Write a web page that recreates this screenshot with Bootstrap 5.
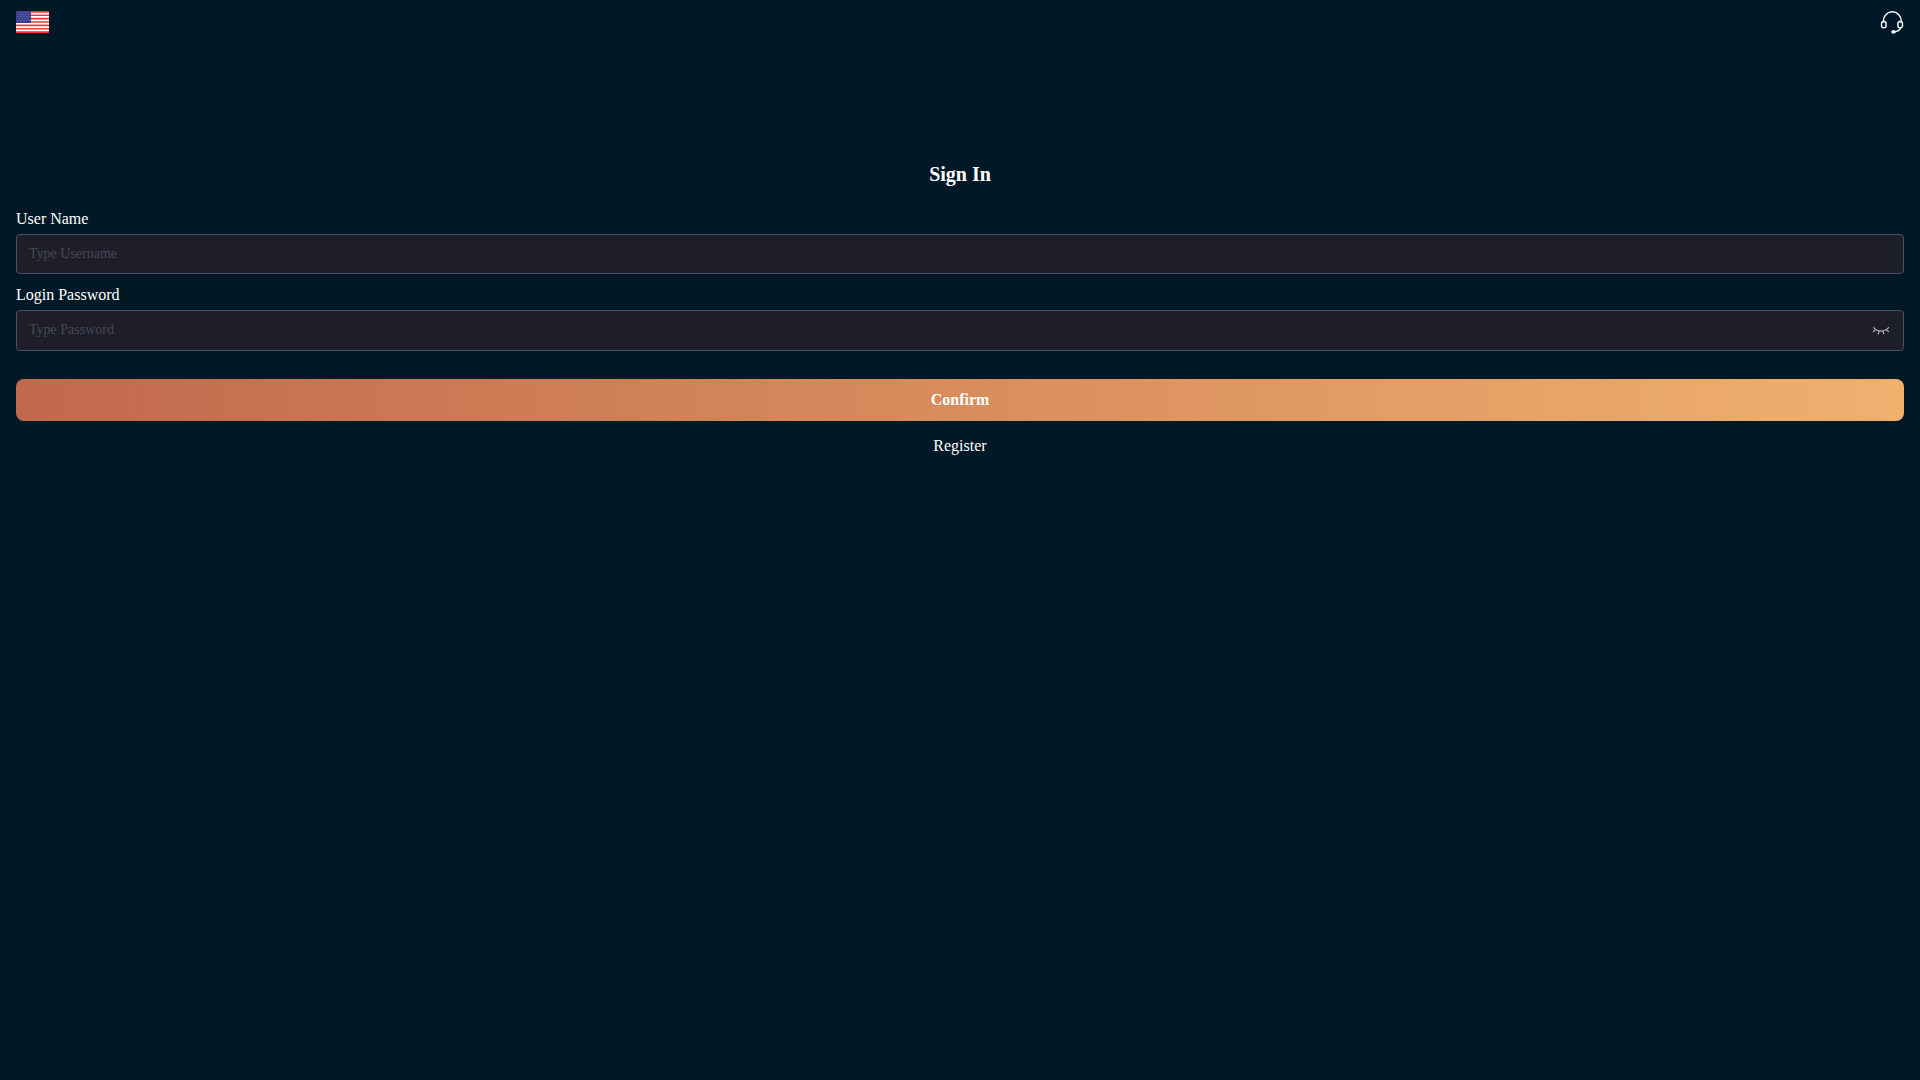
<!DOCTYPE html>
<html lang="en">
<head>
<meta charset="utf-8">
<meta name="viewport" content="width=device-width, initial-scale=1">
<title>Sign In</title>
<link rel="stylesheet" href="https://cdn.jsdelivr.net/npm/bootstrap@5.3.0/dist/css/bootstrap.min.css">
<style>
body { background: #011826; color: #fff; font-family: "Liberation Serif", serif; font-size: 16px; }
.topbar { height: 44px; }
.page-title { font-size: 20px; line-height: 30px; margin: 115px 0 15px; }
.field-label { line-height: 30px; }
.field { margin-bottom: 6px; }
.field .form-control { height: 40px; background: #1e1d2a; border: 1px solid #4c505d; border-radius: 4px; color: #fff; font-size: 14px; padding: 0 12px; }
.field .form-control::placeholder { color: #464a56; opacity: 1; }
.field .secret-input { height: 41px; padding: 0 44px 1px 12px; }
.eye-btn { right: 14px; }
.btn-confirm, .btn-confirm:hover { height: 42px; margin-top: 28px; border: 0; border-radius: 8px; color: #fff; background: linear-gradient(90deg, #c0694c, #f0b06e); }
.register-link { line-height: 24px; margin-top: 13px; }
</style>
</head>
<body>
<header class="topbar d-flex align-items-center justify-content-between px-3">
  <button type="button" class="btn p-0 border-0 d-flex" aria-label="Language">
    <svg width="33" height="22" viewBox="0 0 33 22" aria-hidden="true">
      <rect width="33" height="22" fill="#fff"/>
      <path d="M0 .85h33M0 4.23h33M0 7.62h33M0 11h33M0 14.38h33M0 17.77h33M0 21.15h33" stroke="#ed3833" stroke-width="1.7"/>
      <rect width="15" height="12" fill="#3b3d91"/>
      <path d="M1.5 1.5h13M1.5 5.5h13M1.5 9.5h13M3 3.5h11M3 7.5h11" stroke="#7779b5" stroke-width="1" stroke-dasharray="1 2"/>
    </svg>
  </button>
  <a href="#" class="d-flex text-white" aria-label="Customer service">
    <svg width="24" height="24" viewBox="0 0 24 24" fill="none" stroke="currentColor" stroke-width="1.4" stroke-linecap="round" aria-hidden="true">
      <path d="M3.400 11.500V10.700a8.600 8.600 0 0 1 17.800 0v.8"/>
      <rect x="1.500" y="11.500" width="4.600" height="6.400" rx="2.300"/>
      <rect x="17.900" y="11.500" width="4.600" height="6.400" rx="2.300"/>
      <path d="M20.600 17.800c-.7 2.400-3 3.800-6.500 4"/>
      <ellipse cx="13.500" cy="21.900" rx="1.800" ry="1.300" fill="currentColor" stroke-width="1"/>
    </svg>
  </a>
</header>
<main class="px-3">
  <h1 class="page-title text-center fw-bold">Sign In</h1>
  <form>
    <div class="field">
      <label for="username" class="field-label d-block">User Name</label>
      <input type="text" id="username" class="form-control" placeholder="Type Username">
    </div>
    <div class="field">
      <label for="password" class="field-label d-block">Login Password</label>
      <div class="position-relative">
        <input type="password" id="password" class="form-control secret-input" placeholder="Type Password">
        <button type="button" class="eye-btn btn p-0 border-0 d-flex position-absolute top-50 translate-middle-y" aria-label="Show password">
          <svg width="18" height="16" viewBox="0 0 18 16" fill="none" stroke="#b4b5bd" stroke-width="1.2" stroke-linecap="round" aria-hidden="true">
            <path d="M1.500 4.700C5.500 9.200 12.500 9.200 16.500 4.700M3.500 6.600L1.500 8.700M14.500 6.600L16.500 8.700M7 8.100L6.300 10.900M11 8.100L11.700 10.900"/>
          </svg>
        </button>
      </div>
    </div>
    <button type="submit" class="btn btn-confirm w-100 d-flex align-items-center justify-content-center fw-bold">Confirm</button>
  </form>
  <div class="register-link text-center"><a href="#" class="text-white text-decoration-none">Register</a></div>
</main>
<script src="https://cdn.jsdelivr.net/npm/bootstrap@5.3.0/dist/js/bootstrap.bundle.min.js"></script>
</body>
</html>
